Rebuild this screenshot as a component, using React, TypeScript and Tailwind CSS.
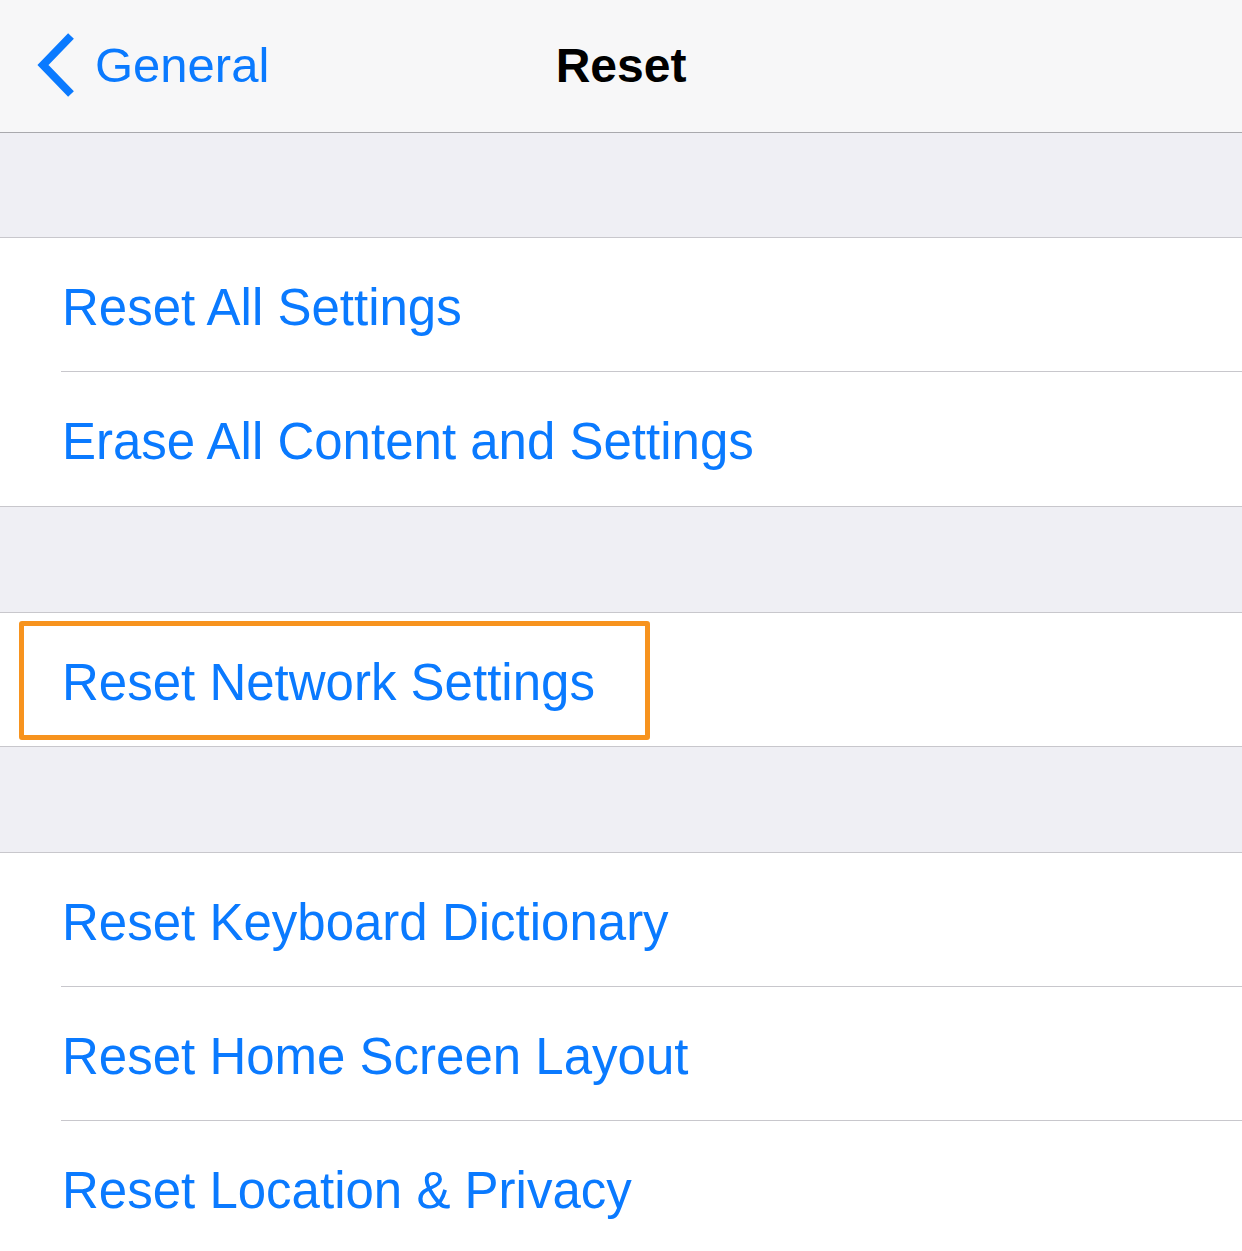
import React from "react";

const FONT = { fontFamily: '"Liberation Sans", Arial, sans-serif' };

type Row = { label: string; highlight?: boolean };

const GROUPS: Row[][] = [
  [{ label: "Reset All Settings" }, { label: "Erase All Content and Settings" }],
  [{ label: "Reset Network Settings", highlight: true }],
  [
    { label: "Reset Keyboard Dictionary" },
    { label: "Reset Home Screen Layout" },
    { label: "Reset Location & Privacy" },
  ],
];

function BackChevron() {
  return (
    <svg width="40" height="64" viewBox="0 0 40 64" className="shrink-0">
      <polyline
        points="35,3 7,32 35,61"
        fill="none"
        stroke="#0a7aff"
        strokeWidth="8"
        strokeLinejoin="miter"
      />
    </svg>
  );
}

function SettingsRow({ row, last }: { row: Row; last: boolean }) {
  if (row.highlight) {
    return (
      <div className="flex h-[133px] items-start pl-[19px] pt-[8px]">
        <div className="flex h-[119px] w-[631px] items-center rounded-[3px] border-[5px] border-[#f7931e] pl-[38px] pt-[4px]">
          <span className="text-[51px] leading-none text-[#0a7aff]">{row.label}</span>
        </div>
      </div>
    );
  }
  return (
    <div className={`flex h-[134px] flex-col ${last ? "" : ""}`}>
      <div className="flex flex-1 items-center pl-[62px] pt-[5px]">
        <span className="text-[51px] leading-none whitespace-nowrap text-[#0a7aff]">{row.label}</span>
      </div>
      {!last && <div className="ml-[61px] h-px bg-[#c8c7cc]" />}
    </div>
  );
}

export default function App() {
  return (
    <div className="h-[1251px] w-[1242px] overflow-hidden bg-[#efeff4]" style={FONT}>
      <div className="grid h-[133px] grid-cols-[1fr_auto_1fr] items-center border-b border-[#a9a9ad] bg-[#f7f7f8]">
        <div className="flex items-center gap-[19px] pl-[36px] pb-[2px]">
          <BackChevron />
          <span className="text-[49px] leading-none text-[#0a7aff]">General</span>
        </div>
        <div className="text-[48px] font-semibold leading-none text-black">Reset</div>
        <div />
      </div>

      <div className="h-[104px]" />

      {GROUPS.map((group, gi) => (
        <div key={gi} className={gi > 0 ? "pt-[105px]" : ""}>
          <div className="border-y border-[#c8c7cc] bg-white">
            {group.map((row, ri) => (
              <SettingsRow key={row.label} row={row} last={ri === group.length - 1} />
            ))}
          </div>
        </div>
      ))}
    </div>
  );
}
